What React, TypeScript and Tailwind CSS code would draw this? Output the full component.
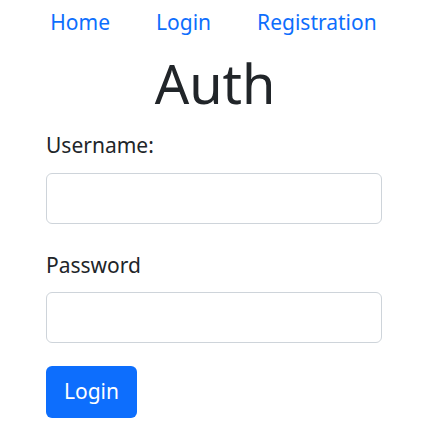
export default function App() {
  return (
    <div className="min-h-[447px] bg-white text-[#212529]" style={{ fontFamily: '"Noto Sans", sans-serif' }}>
      <nav className="flex justify-center gap-[46px] pt-[7px] pr-[3px] text-[21px] leading-[30px] text-[#0d6efd]">
        <a href="#">Home</a>
        <a href="#">Login</a>
        <a href="#">Registration</a>
      </nav>
      <h1 className="mt-[14px] text-center text-[54px] leading-[64px]">Auth</h1>
      <form className="ml-[46px] mt-[15px] flex w-[336px] flex-col">
        <label className="text-[21px] leading-[30px]">Username:</label>
        <input type="text" className="mt-[13px] h-[51px] rounded-[6px] border border-[#ced4da] px-3" />
        <label className="mt-[26px] text-[21px] leading-[30px]">Password</label>
        <input type="password" className="mt-[12px] h-[51px] rounded-[6px] border border-[#ced4da] px-3" />
        <div className="mt-[23px]">
          <button type="button" className="h-[52px] w-[91px] rounded-[6px] bg-[#0d6efd] text-[21px] text-white">
            Login
          </button>
        </div>
      </form>
    </div>
  );
}
